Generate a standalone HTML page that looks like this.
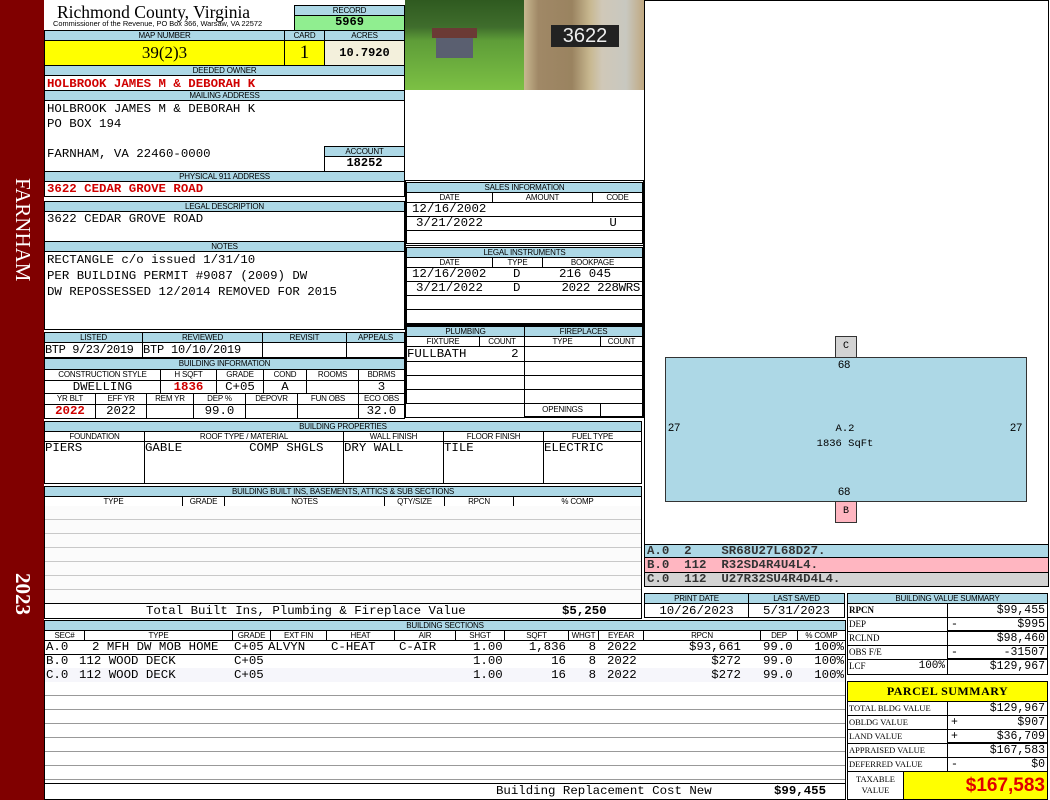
<!DOCTYPE html>
<html><head><meta charset="utf-8">
<style>
*{margin:0;padding:0;box-sizing:border-box}
body{width:1050px;height:800px;position:relative;background:#fff;overflow:hidden;font-family:"Liberation Mono",monospace;font-size:12.4px;color:#000}
div,span{position:absolute}
.bx{border:1px solid #000}
.h{background:#add8e6;border:1px solid #000;font-family:"Liberation Sans",sans-serif;font-size:8px;text-align:center;line-height:9px;white-space:nowrap;overflow:hidden;letter-spacing:-0.2px}
.c{border:1px solid #000;white-space:nowrap;overflow:hidden;line-height:13px}
.ce{text-align:center}.r{text-align:right;padding-right:2px}
.red{color:#d00000;font-weight:bold}
.row span{top:0;white-space:pre;line-height:14px}
.sv{font-size:11.5px;line-height:13px}
.sv .m{left:3px;top:0}
.sv .v{right:2px;top:0}
.lb{font-family:'Liberation Serif',serif;font-size:9px;padding-left:1px;line-height:13px}
</style></head><body>
<div style="left:0;top:0;width:44px;height:800px;background:#800000"></div>
<div style="left:10px;top:178px;width:26px;height:96px;color:#fff;font-family:'Liberation Serif',serif;font-size:21px;writing-mode:vertical-rl;line-height:26px">FARNHAM</div>
<div style="left:10px;top:573px;width:26px;height:50px;color:#fff;font-family:'Liberation Serif',serif;font-size:21px;font-weight:bold;writing-mode:vertical-rl;line-height:26px">2023</div>

<div style="left:57px;top:2px;font-family:'Liberation Serif',serif;font-size:17.5px;line-height:20px">Richmond County, Virginia</div>
<div style="left:53px;top:19px;font-family:'Liberation Sans',sans-serif;font-size:7.4px;line-height:9px">Commissioner of the Revenue, PO Box 366, Warsaw, VA 22572</div>
<div class="h" style="left:294px;top:5px;width:111px;height:11px">RECORD</div>
<div class="c ce" style="left:294px;top:15px;width:111px;height:16px;background:#90ee90;font-weight:bold;font-size:12px">5969</div>
<div class="h" style="left:44px;top:30px;width:241px;height:11px">MAP NUMBER</div>
<div class="h" style="left:284px;top:30px;width:41px;height:11px">CARD</div>
<div class="h" style="left:324px;top:30px;width:81px;height:11px">ACRES</div>
<div class="c ce" style="left:44px;top:40px;width:241px;height:26px;background:#ffff00;font-family:'Liberation Serif',serif;font-size:17px;line-height:24px">39(2)3</div>
<div class="c ce" style="left:284px;top:40px;width:41px;height:26px;background:#ffff00;font-family:'Liberation Serif',serif;font-size:19px;line-height:24px">1</div>
<div class="c ce" style="left:324px;top:40px;width:81px;height:26px;background:#f3f0dc;font-weight:bold;font-size:12px;line-height:24px">10.7920</div>
<div class="h" style="left:44px;top:65px;width:361px;height:11px">DEEDED OWNER</div>
<div class="c red" style="left:44px;top:75px;width:361px;height:16px;padding-left:2px;line-height:16px">HOLBROOK JAMES M &amp; DEBORAH K</div>
<div class="h" style="left:44px;top:90px;width:361px;height:11px">MAILING ADDRESS</div>
<div class="c" style="left:44px;top:100px;width:361px;height:72px;padding-left:2px;line-height:15px;padding-top:1px">HOLBROOK JAMES M &amp; DEBORAH K<br>PO BOX 194<br><br>FARNHAM, VA 22460-0000</div>
<div class="h" style="left:324px;top:146px;width:81px;height:11px">ACCOUNT</div>
<div class="c ce" style="left:324px;top:156px;width:81px;height:16px;font-weight:bold;font-size:12px">18252</div>
<div class="h" style="left:44px;top:171px;width:361px;height:11px">PHYSICAL 911 ADDRESS</div>
<div class="c red" style="left:44px;top:181px;width:361px;height:16px;padding-left:2px;line-height:15px">3622 CEDAR GROVE ROAD</div>
<div class="h" style="left:44px;top:201px;width:361px;height:11px">LEGAL DESCRIPTION</div>
<div class="c" style="left:44px;top:211px;width:361px;height:31px;padding-left:2px;line-height:15px">3622 CEDAR GROVE ROAD</div>
<div class="h" style="left:44px;top:241px;width:361px;height:11px">NOTES</div>
<div class="c" style="left:44px;top:251px;width:361px;height:79px;padding-left:2px;line-height:16px">RECTANGLE c/o issued 1/31/10<br>PER BUILDING PERMIT #9087 (2009) DW<br>DW REPOSSESSED 12/2014 REMOVED FOR 2015</div>

<div class="h" style="left:44px;top:332px;width:99px;height:11px">LISTED</div>
<div class="h" style="left:142px;top:332px;width:121px;height:11px">REVIEWED</div>
<div class="h" style="left:262px;top:332px;width:85px;height:11px">REVISIT</div>
<div class="h" style="left:346px;top:332px;width:59px;height:11px">APPEALS</div>
<div class="c" style="left:44px;top:342px;width:99px;height:16px;line-height:15px;font-size:12px;letter-spacing:-0.4px">BTP  9/23/2019</div>
<div class="c" style="left:142px;top:342px;width:121px;height:16px;line-height:15px;font-size:12px;letter-spacing:-0.2px">BTP  10/10/2019</div>
<div class="c" style="left:262px;top:342px;width:85px;height:16px"></div>
<div class="c" style="left:346px;top:342px;width:59px;height:16px"></div>
<div class="h" style="left:44px;top:358px;width:361px;height:12px">BUILDING INFORMATION</div>
<div class="h" style="left:44px;top:369px;width:117px;height:12px;background:#fff;line-height:10px">CONSTRUCTION STYLE</div>
<div class="h" style="left:160px;top:369px;width:57px;height:12px;background:#fff;line-height:10px">H SQFT</div>
<div class="h" style="left:216px;top:369px;width:48px;height:12px;background:#fff;line-height:10px">GRADE</div>
<div class="h" style="left:263px;top:369px;width:44px;height:12px;background:#fff;line-height:10px">COND</div>
<div class="h" style="left:306px;top:369px;width:53px;height:12px;background:#fff;line-height:10px">ROOMS</div>
<div class="h" style="left:358px;top:369px;width:47px;height:12px;background:#fff;line-height:10px">BDRMS</div>
<div class="c ce" style="left:44px;top:380px;width:117px;height:14px">DWELLING</div>
<div class="c ce red" style="left:160px;top:380px;width:57px;height:14px">1836</div>
<div class="c ce" style="left:216px;top:380px;width:48px;height:14px">C+05</div>
<div class="c ce" style="left:263px;top:380px;width:44px;height:14px">A</div>
<div class="c ce" style="left:306px;top:380px;width:53px;height:14px"></div>
<div class="c ce" style="left:358px;top:380px;width:47px;height:14px">3</div>
<div class="h" style="left:44px;top:393px;width:52px;height:12px;background:#fff">YR BLT</div>
<div class="h" style="left:95px;top:393px;width:52px;height:12px;background:#fff">EFF YR</div>
<div class="h" style="left:146px;top:393px;width:48px;height:12px;background:#fff">REM YR</div>
<div class="h" style="left:193px;top:393px;width:53px;height:12px;background:#fff">DEP %</div>
<div class="h" style="left:245px;top:393px;width:53px;height:12px;background:#fff">DEPOVR</div>
<div class="h" style="left:297px;top:393px;width:62px;height:12px;background:#fff">FUN OBS</div>
<div class="h" style="left:358px;top:393px;width:47px;height:12px;background:#fff">ECO OBS</div>
<div class="c ce red" style="left:44px;top:404px;width:52px;height:15px">2022</div>
<div class="c ce" style="left:95px;top:404px;width:52px;height:15px">2022</div>
<div class="c ce" style="left:146px;top:404px;width:48px;height:15px"></div>
<div class="c ce" style="left:193px;top:404px;width:53px;height:15px">99.0</div>
<div class="c ce" style="left:245px;top:404px;width:53px;height:15px"></div>
<div class="c ce" style="left:297px;top:404px;width:62px;height:15px"></div>
<div class="c ce" style="left:358px;top:404px;width:47px;height:15px">32.0</div>

<div style="left:405px;top:0;width:119px;height:90px;background:linear-gradient(#2f5a20 0,#3f6d2c 30%,#5e9d38 45%,#7cc044 100%)"></div>
<div style="left:432px;top:28px;width:45px;height:10px;background:#6b3a35"></div>
<div style="left:436px;top:38px;width:37px;height:20px;background:#5a5f70"></div>
<div style="left:524px;top:0;width:120px;height:90px;background:linear-gradient(90deg,#c8b890 0,#a08866 12%,#9a8360 40%,#c8b890 55%,#d0c8b8 65%,#c8c8c0 85%,#c0a880 100%)"></div>
<div style="left:551px;top:25px;width:68px;height:22px;background:#222;color:#eee;font-family:'Liberation Sans',sans-serif;font-size:20px;line-height:22px;text-align:center;font-weight:100">3622</div>

<div class="bx" style="left:644px;top:0;width:405px;height:546px"></div>
<div style="left:665px;top:357px;width:362px;height:145px;background:#add8e6;border:1px solid #333"></div>
<div style="left:835px;top:336px;width:22px;height:22px;background:#d3d3d3;border:1px solid #333;font-size:10px;text-align:center;line-height:20px">C</div>
<div style="left:835px;top:501px;width:22px;height:22px;background:#ffb6c1;border:1px solid #333;font-size:10px;text-align:center;line-height:20px">B</div>
<div style="left:838px;top:359px;font-family:'Liberation Sans',sans-serif;font-size:11px">68</div>
<div style="left:838px;top:486px;font-family:'Liberation Sans',sans-serif;font-size:11px">68</div>
<div style="left:668px;top:422px;font-family:'Liberation Sans',sans-serif;font-size:11px">27</div>
<div style="left:1010px;top:422px;font-family:'Liberation Sans',sans-serif;font-size:11px">27</div>
<div style="left:780px;top:422px;width:130px;text-align:center;font-size:10.5px;line-height:15px">A.2<br>1836 SqFt</div>
<div style="left:644px;top:544px;width:405px;height:14px;background:#add8e6;border:1px solid #000;font-weight:bold;color:#333;line-height:12px;padding-left:2px;white-space:pre">A.0  2    SR68U27L68D27.</div>
<div style="left:644px;top:558px;width:405px;height:15px;background:#ffb6c1;border-left:1px solid #000;border-right:1px solid #000;font-weight:bold;color:#333;line-height:14px;padding-left:2px;white-space:pre">B.0  112  R32SD4R4U4L4.</div>
<div style="left:644px;top:572px;width:405px;height:15px;background:#d3d3d3;border:1px solid #000;font-weight:bold;color:#333;line-height:13px;padding-left:2px;white-space:pre">C.0  112  U27R32SU4R4D4L4.</div>

<div class="bx" style="left:405px;top:180px;width:239px;height:66px"></div>
<div class="h" style="left:406px;top:182px;width:237px;height:11px">SALES INFORMATION</div>
<div class="h" style="left:406px;top:192px;width:87px;height:11px;background:#fff">DATE</div>
<div class="h" style="left:492px;top:192px;width:101px;height:11px;background:#fff">AMOUNT</div>
<div class="h" style="left:592px;top:192px;width:51px;height:11px;background:#fff">CODE</div>
<div class="c" style="left:406px;top:202px;width:237px;height:15px;line-height:15px;padding-left:5px;border-top:none">12/16/2002</div>
<div class="c" style="left:406px;top:216px;width:237px;height:15px;line-height:15px;padding-left:9px;border-top:none;white-space:pre">3/21/2022                 U</div>
<div class="c" style="left:406px;top:230px;width:237px;height:14px;border-top:none"></div>
<div class="bx" style="left:405px;top:245px;width:239px;height:80px"></div>
<div class="h" style="left:406px;top:247px;width:237px;height:11px">LEGAL INSTRUMENTS</div>
<div class="h" style="left:406px;top:257px;width:87px;height:11px;background:#fff">DATE</div>
<div class="h" style="left:492px;top:257px;width:51px;height:11px;background:#fff">TYPE</div>
<div class="h" style="left:542px;top:257px;width:101px;height:11px;background:#fff">BOOKPAGE</div>
<div class="c" style="left:406px;top:267px;width:237px;height:15px;border-top:none"><span style="left:5px;top:0;line-height:14px">12/16/2002</span><span style="left:106px;top:0;line-height:14px">D</span><span style="left:152px;top:0;line-height:14px">216 045</span></div>
<div class="c" style="left:406px;top:281px;width:237px;height:15px;border-top:none"><span style="left:9px;top:0;line-height:14px">3/21/2022</span><span style="left:106px;top:0;line-height:14px">D</span><span style="right:2px;top:0;line-height:14px;letter-spacing:-0.3px">2022 228WRS</span></div>
<div class="c" style="left:406px;top:295px;width:237px;height:15px;border-top:none"></div>
<div class="c" style="left:406px;top:309px;width:237px;height:15px;border-top:none"></div>
<div class="bx" style="left:405px;top:325px;width:239px;height:93px"></div>
<div class="h" style="left:406px;top:326px;width:119px;height:11px">PLUMBING</div>
<div class="h" style="left:524px;top:326px;width:119px;height:11px">FIREPLACES</div>
<div class="h" style="left:406px;top:336px;width:74px;height:11px;background:#fff">FIXTURE</div>
<div class="h" style="left:479px;top:336px;width:46px;height:11px;background:#fff">COUNT</div>
<div class="h" style="left:524px;top:336px;width:77px;height:11px;background:#fff">TYPE</div>
<div class="h" style="left:600px;top:336px;width:43px;height:11px;background:#fff">COUNT</div>
<div class="c" style="left:406px;top:346px;width:119px;height:16px;border-top:none;line-height:16px;white-space:pre">FULLBATH      2</div>
<div class="c" style="left:406px;top:361px;width:119px;height:15px;border-top:none"></div>
<div class="c" style="left:406px;top:375px;width:119px;height:15px;border-top:none"></div>
<div class="c" style="left:406px;top:389px;width:119px;height:15px;border-top:none"></div>
<div class="c" style="left:524px;top:346px;width:119px;height:16px;border-top:none"></div>
<div class="c" style="left:524px;top:361px;width:119px;height:15px;border-top:none"></div>
<div class="c" style="left:524px;top:375px;width:119px;height:15px;border-top:none"></div>
<div class="c" style="left:524px;top:389px;width:119px;height:15px;border-top:none"></div>
<div class="h" style="left:524px;top:403px;width:77px;height:14px;background:#fff;line-height:12px">OPENINGS</div>
<div class="c" style="left:600px;top:403px;width:43px;height:14px"></div>

<div class="h" style="left:44px;top:421px;width:598px;height:11px">BUILDING PROPERTIES</div>
<div class="h" style="left:44px;top:431px;width:101px;height:11px;background:#fff">FOUNDATION</div>
<div class="h" style="left:144px;top:431px;width:200px;height:11px;background:#fff">ROOF TYPE / MATERIAL</div>
<div class="h" style="left:343px;top:431px;width:101px;height:11px;background:#fff">WALL FINISH</div>
<div class="h" style="left:443px;top:431px;width:101px;height:11px;background:#fff">FLOOR FINISH</div>
<div class="h" style="left:543px;top:431px;width:99px;height:11px;background:#fff">FUEL TYPE</div>
<div class="c" style="left:44px;top:441px;width:101px;height:43px">PIERS</div>
<div class="c" style="left:144px;top:441px;width:200px;height:43px;white-space:pre">GABLE         COMP SHGLS</div>
<div class="c" style="left:343px;top:441px;width:101px;height:43px">DRY WALL</div>
<div class="c" style="left:443px;top:441px;width:101px;height:43px">TILE</div>
<div class="c" style="left:543px;top:441px;width:99px;height:43px">ELECTRIC</div>

<div class="bx" style="left:44px;top:486px;width:598px;height:133px"></div>
<div class="h" style="left:44px;top:486px;width:598px;height:11px">BUILDING BUILT INS, BASEMENTS, ATTICS &amp; SUB SECTIONS</div>
<div class="h" style="left:44px;top:496px;width:139px;height:11px;background:#fff">TYPE</div>
<div class="h" style="left:182px;top:496px;width:43px;height:11px;background:#fff">GRADE</div>
<div class="h" style="left:224px;top:496px;width:161px;height:11px;background:#fff">NOTES</div>
<div class="h" style="left:384px;top:496px;width:61px;height:11px;background:#fff">QTY/SIZE</div>
<div class="h" style="left:444px;top:496px;width:70px;height:11px;background:#fff">RPCN</div>
<div class="h" style="left:513px;top:496px;width:129px;height:11px;background:#fff">% COMP</div>
<div style="left:45px;top:506px;width:596px;height:97px;background:repeating-linear-gradient(#fbfbfb 0,#fbfbfb 13px,#c8c8c8 13px,#c8c8c8 14px)"></div>
<div class="c" style="left:44px;top:603px;width:598px;height:16px"><span style="left:101px;top:0;line-height:15px">Total Built Ins, Plumbing &amp; Fireplace Value</span><span style="left:517px;top:0;line-height:15px;font-weight:bold">$5,250</span></div>

<div class="h" style="left:644px;top:593px;width:105px;height:11px">PRINT DATE</div>
<div class="h" style="left:748px;top:593px;width:97px;height:11px">LAST SAVED</div>
<div class="c ce" style="left:644px;top:603px;width:105px;height:15px;line-height:14px">10/26/2023</div>
<div class="c ce" style="left:748px;top:603px;width:97px;height:15px;line-height:14px">5/31/2023</div>

<div class="bx" style="left:44px;top:620px;width:802px;height:180px"></div>
<div class="h" style="left:44px;top:620px;width:802px;height:11px">BUILDING SECTIONS</div>
<div class="h" style="left:44px;top:630px;width:41px;height:11px;background:#fff">SEC#</div>
<div class="h" style="left:84px;top:630px;width:149px;height:11px;background:#fff">TYPE</div>
<div class="h" style="left:232px;top:630px;width:39px;height:11px;background:#fff">GRADE</div>
<div class="h" style="left:270px;top:630px;width:57px;height:11px;background:#fff">EXT FIN</div>
<div class="h" style="left:326px;top:630px;width:69px;height:11px;background:#fff">HEAT</div>
<div class="h" style="left:394px;top:630px;width:62px;height:11px;background:#fff">AIR</div>
<div class="h" style="left:455px;top:630px;width:50px;height:11px;background:#fff">SHGT</div>
<div class="h" style="left:504px;top:630px;width:65px;height:11px;background:#fff">SQFT</div>
<div class="h" style="left:568px;top:630px;width:31px;height:11px;background:#fff">WHGT</div>
<div class="h" style="left:598px;top:630px;width:46px;height:11px;background:#fff">EYEAR</div>
<div class="h" style="left:643px;top:630px;width:118px;height:11px;background:#fff">RPCN</div>
<div class="h" style="left:760px;top:630px;width:38px;height:11px;background:#fff">DEP</div>
<div class="h" style="left:797px;top:630px;width:49px;height:11px;background:#fff">% COMP</div>
<div class="c row" style="left:44px;top:640px;width:802px;height:15px;border-top:none"><span style="left:1px">A.0</span><span style="left:47px">2 MFH DW MOB HOME</span><span style="left:189px">C+05</span><span style="left:223px">ALVYN</span><span style="left:286px">C-HEAT</span><span style="left:354px">C-AIR</span><span style="left:428px">1.00</span><span style="right:279px">1,836</span><span style="right:249px">8</span><span style="left:562px">2022</span><span style="right:104px">$93,661</span><span style="left:718px">99.0</span><span style="right:1px">100%</span></div>
<div class="c row" style="left:44px;top:654px;width:802px;height:15px;border-top:none"><span style="left:1px">B.0</span><span style="left:34px">112 WOOD DECK</span><span style="left:189px">C+05</span><span style="left:428px">1.00</span><span style="right:279px">16</span><span style="right:249px">8</span><span style="left:562px">2022</span><span style="right:104px">$272</span><span style="left:718px">99.0</span><span style="right:1px">100%</span></div>
<div class="c row" style="left:44px;top:668px;width:802px;height:15px;border-top:none;background:#f6f6fb"><span style="left:1px">C.0</span><span style="left:34px">112 WOOD DECK</span><span style="left:189px">C+05</span><span style="left:428px">1.00</span><span style="right:279px">16</span><span style="right:249px">8</span><span style="left:562px">2022</span><span style="right:104px">$272</span><span style="left:718px">99.0</span><span style="right:1px">100%</span></div>
<div style="left:45px;top:682px;width:800px;height:101px;background:repeating-linear-gradient(#fff 0,#fff 13px,#999 13px,#999 14px)"></div>
<div class="c" style="left:44px;top:783px;width:802px;height:17px"><span style="left:451px;top:0;line-height:15px">Building Replacement Cost New</span><span style="left:729px;top:0;line-height:15px;font-weight:bold">$99,455</span></div>

<div class="h" style="left:847px;top:593px;width:201px;height:11px">BUILDING VALUE SUMMARY</div>
<div style="left:847px;top:603px;width:201px;height:72px">
<div class="c lb" style="left:0;top:0;width:101px;height:15px;font-weight:bold">RPCN</div><div class="c sv" style="left:100px;top:0;width:101px;height:15px"><span class="v">$99,455</span></div>
<div class="c lb" style="left:0;top:14px;width:101px;height:15px">DEP</div><div class="c sv" style="left:100px;top:14px;width:101px;height:15px;border-bottom:2px solid #000"><span class="m">-</span><span class="v">$995</span></div>
<div class="c lb" style="left:0;top:28px;width:101px;height:15px">RCLND</div><div class="c sv" style="left:100px;top:28px;width:101px;height:15px"><span class="v">$98,460</span></div>
<div class="c lb" style="left:0;top:42px;width:101px;height:15px">OBS F/E</div><div class="c sv" style="left:100px;top:42px;width:101px;height:15px;border-bottom:2px solid #000"><span class="m">-</span><span class="v">-31507</span></div>
<div class="c lb" style="left:0;top:56px;width:101px;height:16px">LCF<span style="right:2px;top:0;font-family:'Liberation Mono',monospace;font-size:11px">100%</span></div><div class="c sv" style="left:100px;top:56px;width:101px;height:16px"><span class="v">$129,967</span></div>
</div>

<div class="c ce" style="left:847px;top:681px;width:201px;height:21px;background:#ffff00;font-family:'Liberation Serif',serif;font-weight:bold;font-size:12px;line-height:19px;letter-spacing:0.5px">PARCEL SUMMARY</div>
<div style="left:847px;top:701px;width:201px;height:99px">
<div class="c lb" style="left:0;top:0;width:101px;height:15px;font-size:8.5px">TOTAL BLDG VALUE</div><div class="c sv" style="left:100px;top:0;width:101px;height:15px"><span class="v">$129,967</span></div>
<div class="c lb" style="left:0;top:14px;width:101px;height:15px;font-size:8.5px">OBLDG VALUE</div><div class="c sv" style="left:100px;top:14px;width:101px;height:15px"><span class="m">+</span><span class="v">$907</span></div>
<div class="c lb" style="left:0;top:28px;width:101px;height:15px;font-size:8.5px">LAND VALUE</div><div class="c sv" style="left:100px;top:28px;width:101px;height:15px;border-bottom:2px solid #000"><span class="m">+</span><span class="v">$36,709</span></div>
<div class="c lb" style="left:0;top:42px;width:101px;height:15px;font-size:8.5px">APPRAISED VALUE</div><div class="c sv" style="left:100px;top:42px;width:101px;height:15px"><span class="v">$167,583</span></div>
<div class="c lb" style="left:0;top:56px;width:101px;height:15px;font-size:8.5px">DEFERRED VALUE</div><div class="c sv" style="left:100px;top:56px;width:101px;height:15px"><span class="m">-</span><span class="v">$0</span></div>
<div class="c ce" style="left:0;top:70px;width:57px;height:29px;font-size:8.5px;font-family:'Liberation Serif',serif;line-height:11px;padding-top:2px">TAXABLE<br>VALUE</div>
<div class="c" style="left:56px;top:70px;width:145px;height:29px;background:#ffff00;color:#e00000;font-family:'Liberation Sans',sans-serif;font-weight:bold;font-size:19px;text-align:right;line-height:27px;padding-right:2px">$167,583</div>
</div>
</body></html>
